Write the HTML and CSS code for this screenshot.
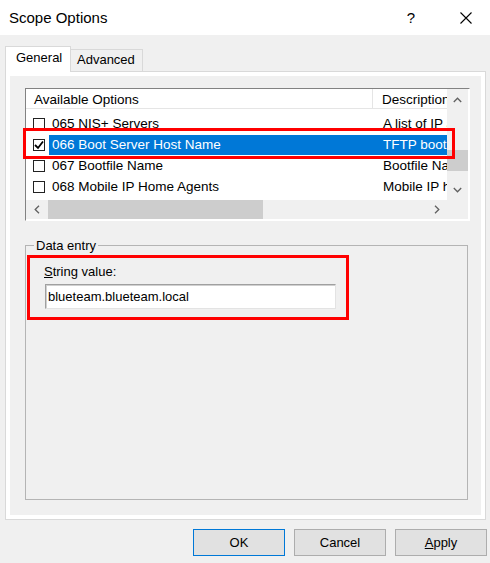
FILE: index.html
```html
<!DOCTYPE html>
<html>
<head>
<meta charset="utf-8">
<link rel="stylesheet" href="styles.css">
</head>
<body>
<div class="window">
  <div class="titlebar">
    <span class="title">Scope Options</span>
    <span class="help">?</span>
    <svg class="close" width="12" height="12" viewBox="0 0 12 12"><path d="M0.5 0.5 L11.5 11.5 M11.5 0.5 L0.5 11.5" stroke="#000" stroke-width="1.1" fill="none"/></svg>
  </div>
  <div class="dialog">
    <div class="tabs">
      <div class="tab active">General</div>
      <div class="tab">Advanced</div>
    </div>
    <div class="panel">
      <div class="page">
        <div class="listview">
          <div class="lv-main">
            <div class="lv-header">
              <div class="hcell c1">Available Options</div>
              <div class="hcell c2">Description</div>
            </div>
            <div class="lv-rows">
              <div class="row">
                <span class="cb"></span>
                <span class="cells"><span class="name">065 NIS+ Servers</span><span class="desc">A list of IP addresses</span></span>
              </div>
              <div class="row selected">
                <span class="cb"><svg width="10" height="10" viewBox="0 0 10 10"><path d="M1 5 L4 8 L9 1.5" stroke="#000" stroke-width="1.8" fill="none"/></svg></span>
                <span class="cells"><span class="name">066 Boot Server Host Name</span><span class="desc">TFTP boot server host name</span></span>
              </div>
              <div class="row">
                <span class="cb"></span>
                <span class="cells"><span class="name">067 Bootfile Name</span><span class="desc">Bootfile Name</span></span>
              </div>
              <div class="row">
                <span class="cb"></span>
                <span class="cells"><span class="name">068 Mobile IP Home Agents</span><span class="desc">Mobile IP home agents</span></span>
              </div>
            </div>
          </div>
          <div class="vscroll">
            <div class="sbtn"><svg width="9" height="6" viewBox="0 0 9 6"><path d="M0.8 5 L4.5 1.2 L8.2 5" stroke="#606060" stroke-width="1.3" fill="none"/></svg></div>
            <div class="vtrack"><div class="vthumb"></div></div>
            <div class="sbtn"><svg width="9" height="6" viewBox="0 0 9 6"><path d="M0.8 1 L4.5 4.8 L8.2 1" stroke="#606060" stroke-width="1.3" fill="none"/></svg></div>
          </div>
          <div class="hscroll">
            <div class="hbtn"><svg width="6" height="9" viewBox="0 0 6 9"><path d="M5 0.8 L1.2 4.5 L5 8.2" stroke="#606060" stroke-width="1.3" fill="none"/></svg></div>
            <div class="htrack"><div class="hthumb"></div></div>
            <div class="hbtn"><svg width="6" height="9" viewBox="0 0 6 9"><path d="M1 0.8 L4.8 4.5 L1 8.2" stroke="#606060" stroke-width="1.3" fill="none"/></svg></div>
          </div>
          <div class="corner"></div>
          <div class="highlight-row"></div>
        </div>
        <fieldset class="group">
          <legend>Data entry</legend>
          <div class="highlight-box">
            <div class="label"><u>S</u>tring value:</div>
            <div class="textbox">blueteam.blueteam.local</div>
          </div>
        </fieldset>
      </div>
    </div>
    <div class="buttons">
      <button class="btn default">OK</button>
      <button class="btn">Cancel</button>
      <button class="btn"><u>A</u>pply</button>
    </div>
  </div>
</div>
</body>
</html>
```

FILE: styles.css
```css
* { box-sizing: border-box; }
html, body { margin: 0; padding: 0; }
body {
  width: 490px;
  height: 563px;
  background: #f0f0f0;
  font-family: "Liberation Sans", Arial, sans-serif;
  font-size: 13px;
  color: #000;
  overflow: hidden;
}
.window { width: 490px; height: 563px; display: flex; flex-direction: column; }
.titlebar {
  height: 35px;
  background: #fff;
  display: flex;
  align-items: center;
  padding-left: 9px;
  padding-right: 18px;
}
.title { flex: 1; font-size: 15px; }
.help { font-size: 15px; margin-right: 45px; }
.close { display: block; }

.dialog { flex: 1; display: flex; flex-direction: column; padding: 10px 3px 0 5px; }
.tabs { display: flex; align-items: flex-end; height: 26px; position: relative; z-index: 1; }
.tab {
  border: 1px solid #d9d9d9;
  border-bottom: none;
  background: #f0f0f0;
  height: 22px;
  padding: 2px 7px 0 6px;
  margin-left: -1px;
  font-size: 13px;
}
.tab.active {
  background: #fff;
  height: 26px;
  margin-left: 0;
  width: 66px;
  padding: 3px 0 0 10px;
  margin-bottom: -1px;
}
.panel {
  width: 481px;
  height: 449px;
  border: 1px solid #d9d9d9;
  background: #fff;
  padding: 4px;
}
.page {
  height: 100%;
  background: #f0f0f0;
  padding: 12px 11px 15px 15px;
  display: flex;
  flex-direction: column;
}

/* list view */
.listview {
  position: relative;
  height: 133px;
  border: 1px solid;
  border-color: #828282 #fff #fff #828282;
  background: #fff;
  display: grid;
  grid-template-columns: 421px 21px;
  grid-template-rows: 111px 19px;
  font-size: 13.5px;
}
.lv-main { overflow: hidden; }
.lv-header { display: flex; height: 20px; border-bottom: 1px solid #e5e5e5; }
.hcell { white-space: nowrap; overflow: hidden; padding-top: 3px; }
.hcell.c1 { width: 347px; padding-left: 8px; border-right: 1px solid #e5e5e5; }
.hcell.c2 { flex: 1; padding-left: 9px; }
.lv-rows { padding-top: 4px; }
.row { display: flex; align-items: center; height: 21px; padding-left: 7px; }
.cb {
  width: 12px; height: 12px;
  border: 1px solid #222;
  background: #fff;
  display: flex; align-items: center; justify-content: center;
  flex: none;
}
.cells { flex: 1; display: flex; height: 20px; align-items: center; margin-left: 4px; white-space: nowrap; overflow: hidden; }
.name { width: 324px; padding-left: 3px; flex: none; }
.desc { flex: 1; padding-left: 10px; overflow: hidden; }
.row.selected .cells { background: #0078d7; color: #fff; }

.vscroll { background: #f0f0f0; display: flex; flex-direction: column; }
.sbtn { height: 21px; display: flex; align-items: center; justify-content: center; }
.vtrack { flex: 1; padding-top: 40px; }
.vthumb { height: 21px; background: #cdcdcd; }
.hscroll { background: #f0f0f0; display: flex; }
.hbtn { width: 21px; display: flex; align-items: center; justify-content: center; }
.htrack { flex: 1; padding-left: 1px; }
.hthumb { width: 215px; height: 100%; background: #cdcdcd; }
.corner { background: #f0f0f0; }

.highlight-row {
  position: absolute;
  left: -3px;
  top: 39px;
  width: 432px;
  height: 31px;
  border: 3px solid #ff0000;
}

/* group box */
.group {
  flex: 1;
  margin: 17px 2px 0 0;
  padding: 0;
  border: 1px solid #b4b4b4;
  min-width: 0;
}
.group legend { margin-left: 8px; padding: 0 2px; font-size: 13px; }
.highlight-box {
  width: 322px;
  margin: 2px 0 0 1px;
  border: 3px solid #ff0000;
  padding: 6px 10px 8px 14px;
}
.label { line-height: 15px; margin-bottom: 5px; }
.textbox {
  height: 25px;
  margin-left: 1px;
  background: #fff;
  border: 1px solid;
  border-color: #a0a0a0 #e3e3e3 #e3e3e3 #a0a0a0;
  box-shadow: inset 1px 1px 0 #d0d0d0;
  padding: 4px 0 0 2px;
  font-size: 13px;
}

/* buttons */
.buttons { display: flex; justify-content: flex-end; gap: 9px; padding-top: 9px; }
.btn {
  width: 92px;
  height: 27px;
  background: #e1e1e1;
  border: 1px solid #adadad;
  font-family: "Liberation Sans", Arial, sans-serif;
  font-size: 13px;
  color: #000;
  padding: 0;
}
.btn.default { border-color: #0078d7; }
```
